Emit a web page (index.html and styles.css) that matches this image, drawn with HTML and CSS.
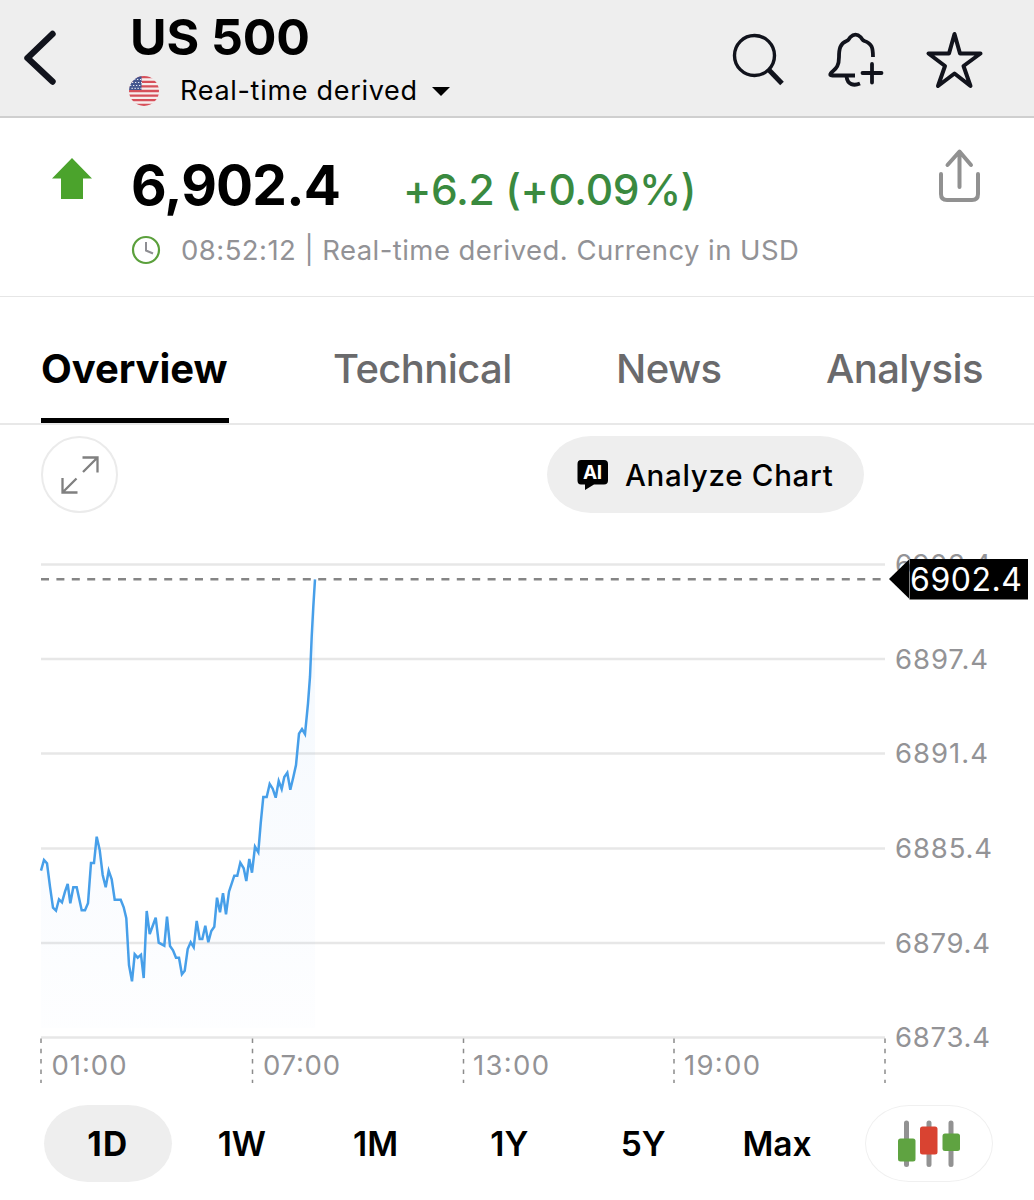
FILE: index.html
```html
<!DOCTYPE html>
<html lang="en">
<head>
  <meta charset="UTF-8">
  <title>US 500</title>
  <link rel="stylesheet" href="styles.css">
</head>
<body>
  <header class="header">
    <svg class="back" width="40" height="60" viewBox="0 0 40 60" fill="none" stroke="#11131c" stroke-width="6.4" stroke-linecap="round" stroke-linejoin="round">
      <path d="M32.500 6 7.500 30 32.500 53.500"/>
    </svg>
    <div class="instrument">
      <h1>US 500</h1>
      <div class="source">
        <svg class="flag" width="30" height="30" viewBox="0 0 30 30">
          <defs><clipPath id="round"><circle cx="15" cy="15" r="15"/></clipPath></defs>
          <g clip-path="url(#round)">
            <rect width="30" height="30" fill="#f6eeee"/>
            <path d="M0 1.200h30M0 5.800h30M0 10.400h30M0 15h30M0 19.600h30M0 24.200h30M0 28.800h30" stroke="#d6505a" stroke-width="2.300"/>
            <rect width="12.500" height="14" fill="#45568f"/>
            <path d="M2 3.500h10M3 6.500h10M1 9.500h11M2.500 12.300h10" stroke="#e4e8f2" stroke-width="1.200" stroke-dasharray="1.300 1.700"/>
          </g>
        </svg>
        <span class="source-name">Real-time derived</span>
        <svg class="caret" width="18" height="9" viewBox="0 0 18 9"><path d="M0 0h18L9 9z"/></svg>
      </div>
    </div>
    <div class="actions">
      <svg width="60" height="60" viewBox="0 0 60 60" fill="none" stroke="#11131c">
        <circle cx="25.500" cy="25.500" r="20" stroke-width="3.400"/>
        <path d="M39.500 39.500 53 53.500" stroke-width="5"/>
      </svg>
      <svg width="60" height="60" viewBox="0 0 60 60" fill="none" stroke="#11131c" stroke-width="3.800" stroke-linecap="round" stroke-linejoin="round">
        <path d="M46 27C46 18 45 13.500 37.500 11C35 10 35.500 9 33.500 7C30.500 4 26.500 4 23.500 7C21.500 9 22 10 19.500 11C13 13.500 12 19 12 27C12 37 8.500 38.500 4 43C2.500 45 3 45.500 5.500 45.500H28" stroke-linecap="butt"/>
        <path d="M19.500 46.500C20.500 55 27 56 33 53.500" stroke-linecap="butt"/>
        <path d="M45 34V52.500M35.500 43H54.500"/>
      </svg>
      <svg width="60" height="60" viewBox="0 0 60 60" fill="none" stroke="#11131c" stroke-width="4" stroke-linecap="round" stroke-linejoin="round">
        <path d="M29.500 4 35 23.500H55.500L38.500 36 45.500 56 29.500 43.500 13 56 20 36 3.500 23.500H24z"/>
      </svg>
    </div>
  </header>

  <section class="quote">
    <svg class="direction" width="40" height="41" viewBox="0 0 40 41" fill="#4ba32c"><path d="M20 0 40 20.500H31V41H9V20.500H0z"/></svg>
    <div class="quote-main">
      <div class="price-row">
        <span class="price">6,902.4</span>
        <span class="change">+6.2 (+0.09%)</span>
      </div>
      <div class="meta">
        <svg width="30" height="30" viewBox="0 0 30 30" fill="none">
          <circle cx="15" cy="15" r="13" stroke="#5ba03c" stroke-width="2.200"/>
          <path d="M15 7V15.500L22 18.500" stroke="#8e8e93" stroke-width="2"/>
        </svg>
        <span class="meta-text">08:52:12 | Real-time derived. Currency in USD</span>
      </div>
    </div>
    <svg class="share" width="44" height="56" viewBox="0 0 44 56" fill="none" stroke="#919191" stroke-width="4" stroke-linecap="round" stroke-linejoin="round">
      <path d="M3 27V47Q3 53 9 53H34Q40 53 40 47V27M21.500 40V5M9.500 18 21.500 4.500 33 18"/>
    </svg>
  </section>

  <nav class="tabs">
    <a class="tab active">Overview</a>
    <a class="tab technical">Technical</a>
    <a class="tab news">News</a>
    <a class="tab analysis">Analysis</a>
  </nav>

  <div class="chart-tools">
    <div class="expand">
      <svg width="40" height="40" viewBox="0 0 40 40" fill="none" stroke="#808080" stroke-width="2.300">
        <path d="M22.500 2.500H37.500V17.500M37 3 23 17M2.500 23V37.500H17.500M3 37 16.500 23.500"/>
      </svg>
    </div>
    <div class="analyze">
      <svg width="32" height="32" viewBox="0 0 32 32">
        <path d="M4 1H27Q31 1 31 5V21.500Q31 25.500 27 25.500H17L8 31V25.500H4Q0.500 25.500 0.500 21.500V5Q0.500 1 4 1z"/>
        <text class="ai" x="6" y="20" textLength="19">AI</text>
      </svg>
      <span>Analyze Chart</span>
    </div>
  </div>

  <svg class="chart" width="1034" height="566" viewBox="0 530 1034 566">
    <defs>
      <linearGradient id="fade" x1="0" y1="580" x2="0" y2="1030" gradientUnits="userSpaceOnUse">
        <stop offset="0" stop-color="#3d9be9" stop-opacity="0.06"/>
        <stop offset="1" stop-color="#3d7be9" stop-opacity="0.008"/>
      </linearGradient>
    </defs>
    <path class="grid" d="M41 564.500H885M41 659H885M41 753.500H885M41 848.500H885M41 943H885M41 1037.500H885"/>
    <path class="tick" d="M41 1038.500V1083M252.500 1038.500V1083M463.500 1038.500V1083M674 1038.500V1083M885 1038.500V1083"/>
    <path id="area" fill="url(#fade)"/>
    <path class="current" d="M41 579.300H885"/>
    <polyline id="line" class="line" points="41,870.7 44,860 47,863.3 50,886.7 53,907.7 56,910.7 59,899.3 62,902.3 65,891.7 67.7,884 70.3,903.3 73.3,887.3 76.7,887.3 81.7,910.3 85,910.3 88,903.3 91,863 94,863 96.7,836.7 99.7,850 102.7,875 105.7,887.3 108.7,870.7 111.7,879.3 114.7,899.7 120.7,899.7 123.7,907.3 126.3,918.3 129,965 132,981.3 134.7,954.3 137.700,957.7 141,954.7 143.7,978 146.7,911 149.7,934 155.7,917.7 158.7,942.7 164.3,945.7 167,916.7 170,946 173,950.3 176,957.7 179,957.7 181.9,974.3 184.7,970.7 187.7,949 190.7,942.3 193.7,947.3 196.7,921 199.7,939 202.3,939 205.3,925.7 208.3,942.3 211.3,931 214.3,926.7 217,897.7 220,912.3 223,893.3 226,914.3 229,891.7 234.3,875.7 237.3,875.7 240.3,862.7 243.7,868.3 246.3,881 249.3,859 252,872.7 255,846.7 258.3,852.3 260.7,823.3 263.3,797 266.7,797 269.7,784 272.7,788.7 275.7,797.7 278.7,781 281.7,789 284.3,777 287.3,772.7 290.3,789.7 293.3,777.3 296,765 299,733.7 302,729 305,734 308,703.3 310,676.7 311.7,636.7 313.3,606.7 315,579.3"/>
    <g class="label">
      <text x="895" y="573.500" textLength="96">6903.4</text>
      <text x="895" y="668.500" textLength="93">6897.4</text>
      <text x="895" y="763" textLength="93">6891.4</text>
      <text x="895" y="858" textLength="97">6885.4</text>
      <text x="895" y="952.500" textLength="95">6879.4</text>
      <text x="895" y="1047" textLength="95">6873.4</text>
      <text x="51.500" y="1074.500" textLength="75">01:00</text>
      <text x="263" y="1074.500" textLength="77">07:00</text>
      <text x="473" y="1074.500" textLength="76">13:00</text>
      <text x="684" y="1074.500" textLength="76">19:00</text>
    </g>
    <path d="M889 579 909 559.500V598.500z"/>
    <rect x="909.500" y="559" width="118.500" height="40.500"/>
    <text class="tag" x="910" y="591" textLength="112">6902.4</text>
  </svg>

  <div class="ranges">
    <span class="range selected">1D</span>
    <span class="range">1W</span>
    <span class="range">1M</span>
    <span class="range">1Y</span>
    <span class="range">5Y</span>
    <span class="range">Max</span>
    <span class="candles">
      <svg width="64" height="48" viewBox="0 0 64 48">
        <path d="M9.500 3V44.500M32 3V44.500M54 3V44.500" stroke="#929292" stroke-width="5" stroke-linecap="round"/>
        <rect x="1" y="18.500" width="17.500" height="23" rx="2.500" fill="#5fa341"/>
        <rect x="23" y="6.500" width="17.500" height="28" rx="2.500" fill="#d94331"/>
        <rect x="45.500" y="13.500" width="17.500" height="17.500" rx="2.500" fill="#5fa341"/>
      </svg>
    </span>
  </div>

  <script>
    // the area under the line runs down to the last grid line
    const points = document.getElementById("line").getAttribute("points");
    document.getElementById("area").setAttribute("d", "M41 1028L" + points + " 315,1028z");
  </script>
</body>
</html>
```
FILE: styles.css
```css
body {
  margin: 0;
  width: 1034px;
  height: 1200px;
  overflow: hidden;
  background: #fff;
  color: #000;
  font-family: Inter, 'Liberation Sans', sans-serif;
}

svg {
  display: block;
  flex: none;
}

.header {
  display: flex;
  box-sizing: border-box;
  height: 118px;
  padding-left: 20px;
  background: #eeeeee;
  border-bottom: 2px solid #cfcfcf;
}

.back {
  margin-top: 28px;
}

.instrument {
  width: 600px;
  margin-left: 69px;
}

h1 {
  margin: 7px 0 0 1px;
  font-size: 50px;
  line-height: 60px;
  font-weight: 700;
  letter-spacing: -0.1px;
}

.source {
  display: flex;
  align-items: center;
  height: 30px;
  margin-top: 9px;
}

.source-name {
  margin-left: 21px;
  font-size: 27px;
  line-height: 28px;
  letter-spacing: 0.7px;
  white-space: nowrap;
}

.caret {
  margin-left: 14px;
}

.actions {
  display: flex;
  gap: 38px;
  margin: 30px 0 0 0;
}

.quote {
  display: flex;
  box-sizing: border-box;
  height: 179px;
  padding: 0 52px 0 52px;
  border-bottom: 1px solid #e6e6e6;
}

.direction {
  margin-top: 40px;
}

.quote-main {
  flex: 1;
  margin: 34px 0 0 39px;
}

.price-row {
  display: flex;
  align-items: baseline;
  height: 66px;
  line-height: 66px;
}

.price {
  width: 272px;
  font-size: 55px;
  font-weight: 700;
  letter-spacing: -0.8px;
}

.change {
  font-size: 42.5px;
  font-weight: 500;
  letter-spacing: -0.4px;
  color: #3a8a3f;
  white-space: nowrap;
}

.meta {
  display: flex;
  align-items: center;
  height: 34px;
  margin-top: 15px;
  color: #929296;
}

.meta-text {
  margin-left: 20px;
  font-size: 27.5px;
  letter-spacing: 0.45px;
  white-space: nowrap;
}

.share {
  margin-top: 29px;
}

.tabs {
  display: flex;
  box-sizing: border-box;
  height: 128px;
  padding: 0 41px;
  border-bottom: 2px solid #e8e8e8;
}

.tab {
  box-sizing: border-box;
  height: 126px;
  padding-top: 47px;
  font-size: 40px;
  line-height: 50px;
  font-weight: 500;
  letter-spacing: -0.6px;
  color: #6a6a6c;
  white-space: nowrap;
}

.tab.active {
  width: 188px;
  font-weight: 700;
  letter-spacing: -0.05px;
  color: #000;
  border-bottom: 5px solid #000;
}

.technical {
  margin-left: 104px;
  width: 180px;
}

.news {
  margin-left: 103px;
  width: 106px;
}

.analysis {
  margin-left: 104px;
}

.chart-tools {
  display: flex;
  justify-content: space-between;
  height: 94px;
  padding: 11px 170px 0 41px;
}

.expand {
  display: flex;
  align-items: center;
  justify-content: center;
  box-sizing: border-box;
  width: 77px;
  height: 77px;
  border: 2px solid #ebebeb;
  border-radius: 50%;
}

.analyze {
  display: flex;
  align-items: center;
  box-sizing: border-box;
  width: 317px;
  height: 77px;
  padding-left: 30px;
  gap: 16px;
  background: #eeeeee;
  border-radius: 44px / 38.5px;
  font-size: 29.5px;
  font-weight: 500;
  letter-spacing: 0.7px;
  white-space: nowrap;
}

.ai {
  font-size: 19px;
  font-weight: 700;
  letter-spacing: 0;
  fill: #fff;
}

.grid {
  stroke: #e7e7e7;
  stroke-width: 2.4;
}

.tick {
  stroke: #8c8c8c;
  stroke-width: 1.5;
  stroke-dasharray: 4.5 5.8;
}

.current {
  stroke: #858585;
  stroke-width: 2.4;
  stroke-dasharray: 8 7.4;
}

.line {
  fill: none;
  stroke: #479fe9;
  stroke-width: 2.5;
}

.label {
  font-size: 27.5px;
  fill: #939396;
}

.tag {
  font-size: 32px;
  fill: #fff;
}

.ranges {
  display: flex;
  gap: 5.8px;
  height: 77px;
  margin-top: 9px;
  padding-left: 44px;
}

.range,
.candles {
  display: flex;
  align-items: center;
  justify-content: center;
  width: 128px;
  height: 77px;
  font-size: 33.5px;
  font-weight: 600;
  border-radius: 44px / 38.5px;
}

.range.selected {
  background: #eeeeee;
  font-weight: 700;
  letter-spacing: 1.5px;
}

.candles {
  box-sizing: border-box;
  margin-left: 18px;
  border: 1.5px solid #f0f0f0;
}
```
